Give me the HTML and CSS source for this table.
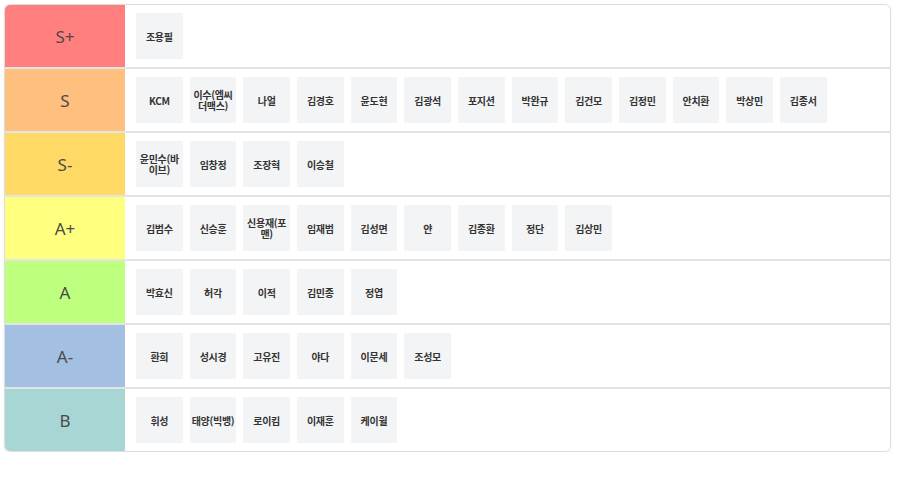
FILE: index.html
```html
<!DOCTYPE html>
<html lang="ko">
<head>
<meta charset="utf-8">
<title>Tier list</title>
<link rel="stylesheet" href="styles.css">
</head>
<body>
<div class="tier-list">
  <div class="row">
    <div class="label t-splus">S+</div>
    <div class="items">
      <div class="item">조용필</div>
    </div>
  </div>
  <div class="row">
    <div class="label t-s">S</div>
    <div class="items">
      <div class="item">KCM</div>
      <div class="item">이수(엠씨더맥스)</div>
      <div class="item">나얼</div>
      <div class="item">김경호</div>
      <div class="item">윤도현</div>
      <div class="item">김광석</div>
      <div class="item">포지션</div>
      <div class="item">박완규</div>
      <div class="item">김건모</div>
      <div class="item">김정민</div>
      <div class="item">안치환</div>
      <div class="item">박상민</div>
      <div class="item">김종서</div>
    </div>
  </div>
  <div class="row">
    <div class="label t-sminus">S-</div>
    <div class="items">
      <div class="item">윤민수(바이브)</div>
      <div class="item">임창정</div>
      <div class="item">조장혁</div>
      <div class="item">이승철</div>
    </div>
  </div>
  <div class="row">
    <div class="label t-aplus">A+</div>
    <div class="items">
      <div class="item">김범수</div>
      <div class="item">신승훈</div>
      <div class="item">신용재(포맨)</div>
      <div class="item">임재범</div>
      <div class="item">김성면</div>
      <div class="item">얀</div>
      <div class="item">김종환</div>
      <div class="item">정단</div>
      <div class="item">김상민</div>
    </div>
  </div>
  <div class="row">
    <div class="label t-a">A</div>
    <div class="items">
      <div class="item">박효신</div>
      <div class="item">허각</div>
      <div class="item">이적</div>
      <div class="item">김민종</div>
      <div class="item">정엽</div>
    </div>
  </div>
  <div class="row">
    <div class="label t-aminus">A-</div>
    <div class="items">
      <div class="item">환희</div>
      <div class="item">성시경</div>
      <div class="item">고유진</div>
      <div class="item">야다</div>
      <div class="item">이문세</div>
      <div class="item">조성모</div>
    </div>
  </div>
  <div class="row">
    <div class="label t-b">B</div>
    <div class="items">
      <div class="item">휘성</div>
      <div class="item">태양(빅뱅)</div>
      <div class="item">로이킴</div>
      <div class="item">이재훈</div>
      <div class="item">케이윌</div>
    </div>
  </div>
</div>
</body>
</html>
```
FILE: styles.css
```css
html, body {
  margin: 0;
  padding: 0;
  background: #fff;
}
body {
  padding: 4px 9px 0 4px;
  font-family: "Noto Sans", "Noto Sans CJK KR", sans-serif;
  color: #333;
}
.tier-list {
  width: 887px;
  box-sizing: border-box;
  border: 1px solid #dedede;
  border-radius: 6px;
  overflow: hidden;
  box-shadow: 0 1px 2px rgba(0, 0, 0, 0.08);
}
.row {
  display: flex;
  height: 64px;
  box-sizing: border-box;
  border-bottom: 2px solid #e4e4e4;
}
.row:last-child {
  border-bottom: none;
  height: 62px;
}
.label {
  width: 120px;
  flex: none;
  display: flex;
  align-items: center;
  justify-content: center;
  font-size: 17px;
  color: #4a4a4a;
}
.t-splus { background: #ff7f7f; }
.t-s { background: #ffbf7f; }
.t-sminus { background: #ffd966; }
.t-aplus { background: #ffff7f; }
.t-a { background: #bfff7f; }
.t-aminus { background: #a3c0e3; }
.t-b { background: #a8d6d5; }
.items {
  display: flex;
  align-items: center;
  gap: 7px;
  padding: 0 0 0 11px;
}
.item {
  width: 46.67px;
  height: 46px;
  box-sizing: border-box;
  padding: 0;
  background: #f3f4f6;
  display: flex;
  align-items: center;
  justify-content: center;
  text-align: center;
  font-family: "Noto Sans CJK KR", sans-serif;
  font-weight: 700;
  font-size: 10px;
  letter-spacing: -0.3px;
  line-height: 1.1;
  color: #333;
  word-break: break-all;
}
```
